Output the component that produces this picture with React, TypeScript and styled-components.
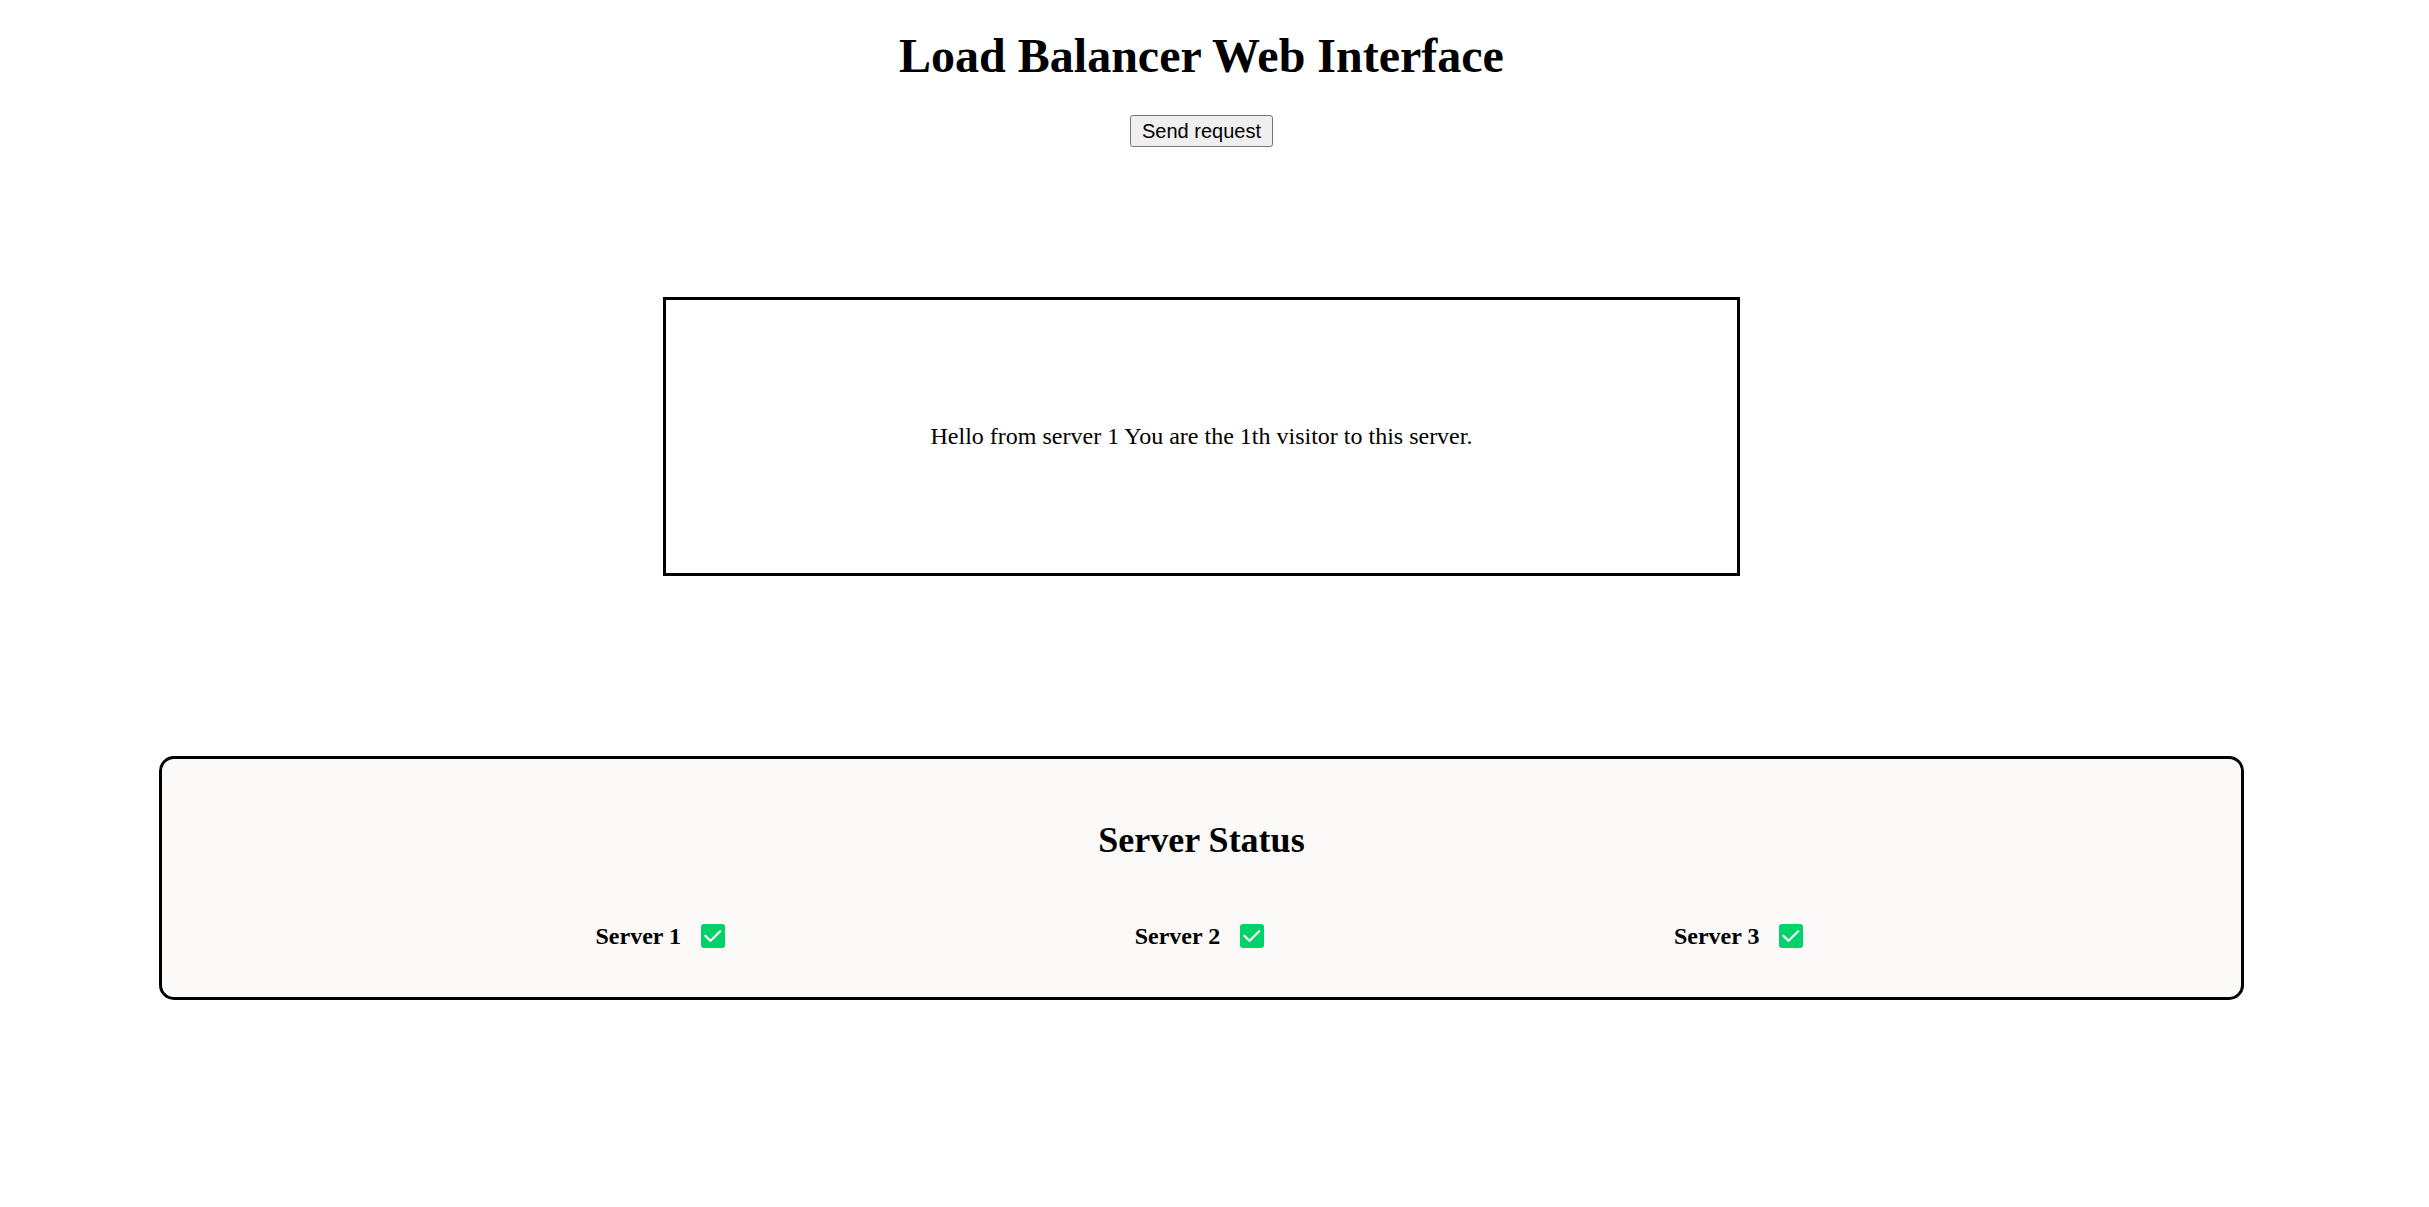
import React from "react";
import styled, { createGlobalStyle } from "styled-components";

const GlobalStyle = createGlobalStyle`
  body {
    margin: 0 38px 0 12px;
    background: #fff;
    color: #000;
    font-family: "Liberation Serif", "Times New Roman", serif;
    font-size: 24px;
    line-height: 28px;
  }
`;

const Page = styled.main`
  display: flex;
  flex-direction: column;
  align-items: center;
  padding: 28px 0;
`;

const Title = styled.h1`
  margin: 0;
  font-size: 48px;
  line-height: 56px;
  text-align: center;
`;

const SendButton = styled.button`
  margin-top: 31px;
  padding: 3px 11px;
  border: 1px solid #767676;
  border-radius: 3px;
  background: #efefef;
  color: #000;
  font-family: "Liberation Sans", Arial, sans-serif;
  font-size: 20px;
  line-height: 24px;
`;

const ResponseBox = styled.section`
  width: 40%;
  margin-top: 150px;
  padding: 122px 60px 123px;
  border: 3px solid #000;
  text-align: center;
`;

const Message = styled.p`
  margin: 0;
`;

const StatusPanel = styled.section`
  width: 80%;
  margin-top: 180px;
  padding: 60px 88px 47px;
  border: 3px solid #000;
  border-radius: 15px;
  background: #fcfaf9;
`;

const StatusTitle = styled.h2`
  margin: 0;
  font-size: 36px;
  line-height: 42px;
  text-align: center;
`;

const ServerList = styled.ul`
  display: grid;
  grid-template-columns: repeat(3, 1fr);
  width: 85%;
  margin: 61px auto 0;
  padding: 0;
  list-style: none;
`;

const ServerItem = styled.li`
  display: flex;
  align-items: center;
  justify-content: center;
  gap: 20px;
  padding-right: 4px;
`;

const ServerName = styled.h3`
  margin: 0;
  font-size: 24px;
  line-height: 28px;
`;

const StatusIcon = styled.svg`
  width: 24px;
  height: 24px;
`;

const servers = ["Server 1", "Server 2", "Server 3"];

export default function App() {
  return (
    <>
      <GlobalStyle />
      <Page>
        <Title>Load Balancer Web Interface</Title>
        <SendButton type="button">Send request</SendButton>
        <ResponseBox>
          <Message>Hello from server 1 You are the 1th visitor to this server.</Message>
        </ResponseBox>
        <StatusPanel>
          <StatusTitle>Server Status</StatusTitle>
          <ServerList>
            {servers.map((name) => (
              <ServerItem key={name}>
                <ServerName>{name}</ServerName>
                <StatusIcon viewBox="0 0 24 24" role="img" aria-label="online">
                  <rect width="24" height="24" rx="3" fill="#00d26a" />
                  <path
                    d="M4.4 11.8 9.6 16.8 19.2 7.2"
                    fill="none"
                    stroke="#f4f4f4"
                    strokeWidth="2.3"
                    strokeLinecap="round"
                    strokeLinejoin="round"
                  />
                </StatusIcon>
              </ServerItem>
            ))}
          </ServerList>
        </StatusPanel>
      </Page>
    </>
  );
}
